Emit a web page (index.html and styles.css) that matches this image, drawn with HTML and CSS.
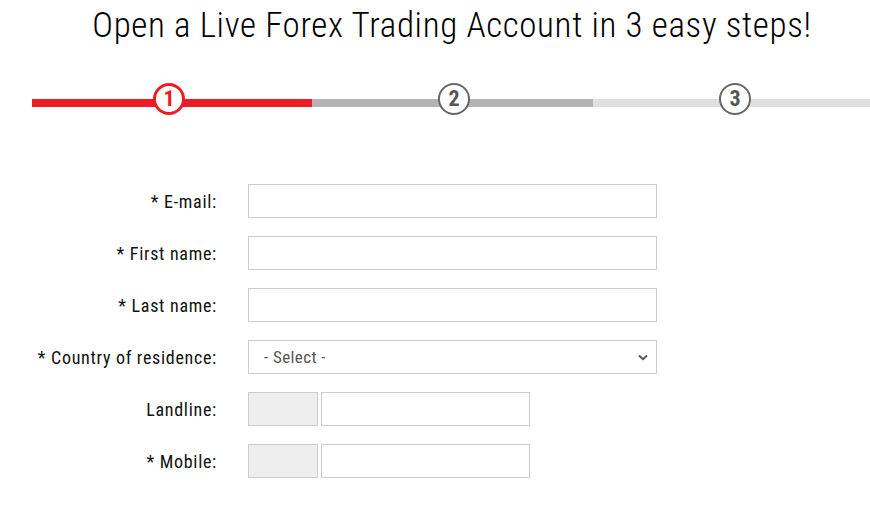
FILE: index.html
```html
<!DOCTYPE html>
<html>

<head>
    <meta charset="utf-8">
    <meta name="viewport" content="width=device-width, initial-scale=1">
    <title>Open a Live Forex Trading Account</title>
    <link rel="stylesheet" href="styles.css">
</head>

<body>
    <h1 class="title">Open a Live Forex Trading Account in 3 easy steps!</h1>

    <div class="steps">
        <div class="step step-active"><span class="num">1</span></div>
        <div class="step step-next"><span class="num">2</span></div>
        <div class="step step-last"><span class="num">3</span></div>
    </div>

    <form class="signup">
        <div class="row">
            <label for="email">* E-mail:</label>
            <input type="text" id="email" class="field">
        </div>
        <div class="row">
            <label for="fname">* First name:</label>
            <input type="text" id="fname" class="field">
        </div>
        <div class="row">
            <label for="lname">* Last name:</label>
            <input type="text" id="lname" class="field">
        </div>
        <div class="row">
            <label for="country">* Country of residence:</label>
            <div class="select-wrap">
                <select id="country" class="field">
                    <option>- Select -</option>
                </select>
                <svg class="chevron" width="10" height="7" viewBox="0 0 10 7"><path d="M1 1.5 L5 5.2 L9 1.5" fill="none" stroke="#555" stroke-width="2"/></svg>
            </div>
        </div>
        <div class="row">
            <label for="landline">Landline:</label>
            <div class="phone">
                <input type="text" class="prefix" disabled>
                <input type="text" id="landline" class="number">
            </div>
        </div>
        <div class="row">
            <label for="mobile">* Mobile:</label>
            <div class="phone">
                <input type="text" class="prefix" disabled>
                <input type="text" id="mobile" class="number">
            </div>
        </div>
    </form>
</body>

</html>
```

FILE: styles.css
```css
body {
    margin: 0;
    background: #fff;
    color: #000;
    font-family: "Roboto", "Liberation Sans", sans-serif;
    font-stretch: condensed;
    overflow: hidden;
}

.title {
    margin: 0;
    padding: 6px 0 0 34px;
    text-align: center;
    font-size: 35px;
    font-weight: 300;
    line-height: 40px;
    letter-spacing: 0.65px;
}

/* progress bar */
.steps {
    display: flex;
    margin-top: 53px;
    padding-left: 32px;
    height: 8px;
}

.step {
    flex: 0 0 281px;
    position: relative;
}

.step-active {
    flex-basis: 280px;
    background: #ed1c24;
}

.step-next {
    background: #b4b4b4;
}

.step-last {
    background: #e0e0e0;
}

.step .num {
    position: absolute;
    top: -16px;
    left: 121px;
    width: 28px;
    height: 28px;
    border: 2px solid #666;
    border-radius: 50%;
    background: #fff;
    color: #555;
    font-size: 22px;
    font-weight: 700;
    line-height: 28px;
    text-align: center;
}

.step-next .num,
.step-last .num {
    left: 126px;
}

.step-active .num {
    border: 3px solid #ed1c24;
    width: 26px;
    height: 26px;
    line-height: 26px;
    color: #ed1c24;
}

/* form */
.signup {
    display: flex;
    flex-direction: column;
    gap: 18px;
    margin-top: 77px;
}

.row {
    display: flex;
    align-items: center;
    gap: 31px;
}

.row label {
    flex: 0 0 217px;
    text-align: right;
    font-size: 18px;
    font-weight: 400;
    letter-spacing: 0.7px;
    color: #111;
}

.field {
    box-sizing: border-box;
    width: 409px;
    height: 34px;
    margin: 0;
    border: 1px solid #ccc;
    border-radius: 0;
    background: #fff;
    font-family: inherit;
    font-stretch: condensed;
    font-size: 17px;
    letter-spacing: 0.4px;
}

.select-wrap {
    position: relative;
}

.select-wrap select {
    appearance: none;
    -webkit-appearance: none;
    padding-left: 15px;
    color: #555;
}

.chevron {
    position: absolute;
    right: 9px;
    top: 14px;
    pointer-events: none;
}

.phone {
    display: flex;
    gap: 3px;
}

.phone input {
    box-sizing: border-box;
    height: 34px;
    margin: 0;
    border: 1px solid #ccc;
    border-radius: 0;
}

.prefix {
    width: 70px;
    background: #eee;
}

.number {
    width: 209px;
    background: #fff;
}
```
